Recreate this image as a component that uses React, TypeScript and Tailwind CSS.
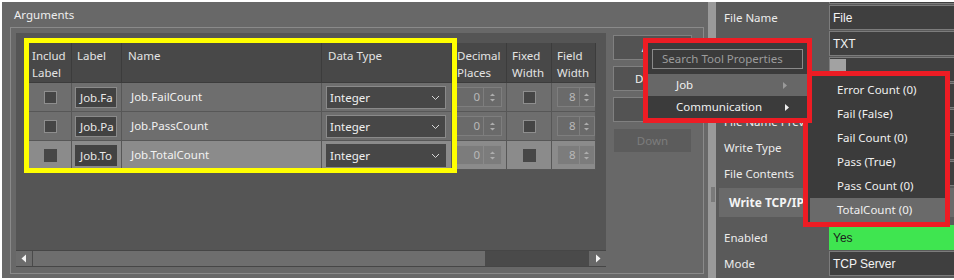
import React from "react";

const rows = [
  { label: "Job.Fa", name: "Job.FailCount", sel: false },
  { label: "Job.Pa", name: "Job.PassCount", sel: false },
  { label: "Job.To", name: "Job.TotalCount", sel: true },
];

const headers = ["Includ\nLabel", "Label", "Name", "Data Type", "Decimal\nPlaces", "Fixed\nWidth", "Field\nWidth"];

const cols = "grid grid-cols-[43px_50px_200px_130px_55px_45px_44px]";

function Check({ sel }: { sel: boolean }) {
  return (
    <div
      className={
        sel
          ? "w-[13px] h-[13px] bg-[#474747]"
          : "w-[13px] h-[13px] bg-[#454545] border border-[#8e8e8e]"
      }
    />
  );
}

function Arrows() {
  return (
    <svg width="7" height="11" viewBox="0 0 7 11">
      <polygon points="1,4 6,4 3.5,1.5" fill="#adadad" />
      <polygon points="1,7 6,7 3.5,9.5" fill="#adadad" />
    </svg>
  );
}

function Spin({ value, sel, w }: { value: string; sel: boolean; w: string }) {
  const bg = sel ? "bg-[#7c7c7c] border-[#8a8a8a]" : "bg-[#6a6a6a] border-[#7e7e7e]";
  return (
    <div className="flex h-[20px]">
      <div className={`${w} ${bg} border flex items-center justify-end pr-[3px] text-[#b8b8b8]`}>{value}</div>
      <div className={`w-[18px] ${bg} border border-l-0 flex items-center justify-center`}>
        <Arrows />
      </div>
    </div>
  );
}

function Chevron() {
  return (
    <svg width="9" height="6" viewBox="0 0 9 6">
      <polyline points="1,1 4.5,4.5 8,1" fill="none" stroke="#d8d8d8" strokeWidth="1" />
    </svg>
  );
}

function Table() {
  return (
    <div className="w-[567px]">
      <div className={`${cols} h-[40px] bg-[#484848]`}>
        {headers.map((h, i) => (
          <div
            key={h}
            className={`border-r border-b border-[#3c3c3c] pt-[4px] leading-[17px] whitespace-pre text-[#e4e4e4] ${
              i === 0 ? "pl-[3px]" : i === 2 || i === 3 ? "pl-[6px]" : "pl-[5px]"
            }`}
          >
            {h}
          </div>
        ))}
      </div>
      {rows.map((r) => {
        const bg = r.sel ? "bg-[#8b8b8b]" : "bg-[#6e6e6e]";
        const cell = `border-r border-b border-[#575757] h-[29px] ${bg}`;
        return (
          <div key={r.name} className={cols}>
            <div className={`${cell} flex items-center justify-center`}>
              <Check sel={r.sel} />
            </div>
            <div className={`${cell} pl-[3px] pt-[4px]`}>
              <div
                className={`w-[42px] h-[21px] bg-[#424242] border ${
                  r.sel ? "border-[#424242]" : "border-[#8a8a8a]"
                } pl-[4px] overflow-hidden whitespace-nowrap leading-[19px] text-[#e8e8e8]`}
              >
                {r.label}
              </div>
            </div>
            <div className={`${cell} pl-[9px] flex items-center text-[#f2f2f2]`}>{r.name}</div>
            <div className={`${cell} pl-[4px] pt-[3px]`}>
              <div
                className={`w-[120px] h-[23px] bg-[#474747] border ${
                  r.sel ? "border-[#474747]" : "border-[#8a8a8a]"
                } flex items-center justify-between pl-[3px] pr-[5px] text-[#f0f0f0]`}
              >
                <span>Integer</span>
                <Chevron />
              </div>
            </div>
            <div className={`${cell} pl-[2px] pt-[4px]`}>
              <Spin value="0" sel={r.sel} w="w-[30px]" />
            </div>
            <div className={`${cell} flex items-center justify-center`}>
              <Check sel={r.sel} />
            </div>
            <div className={`${cell} pl-[5px] pt-[4px] overflow-hidden`}>
              <Spin value="8" sel={r.sel} w="w-[26px]" />
            </div>
          </div>
        );
      })}
    </div>
  );
}

function Btn({ text, disabled }: { text: string; disabled?: boolean }) {
  return (
    <div
      className={
        disabled
          ? "h-[25px] border border-[#686868] bg-[#5c5c5c] flex items-center justify-center text-[#7c7c7c]"
          : "h-[25px] border border-[#808080] bg-[#535353] flex items-center justify-center text-[#f0f0f0]"
      }
    >
      {text}
    </div>
  );
}

// labels hidden under the popups are left empty
const props = [
  { label: "File Name", value: "File" },
  { label: "", value: "TXT" },
  { label: "", value: "", swatch: true },
  { label: "", value: "" },
  { label: "File Name Preview", value: "" },
  { label: "Write Type", value: "" },
  { label: "File Contents", value: "" },
];

function PropRow({ label, value, green, swatch }: { label: string; value: string; green?: boolean; swatch?: boolean }) {
  return (
    <div className="h-[26px] flex">
      <div className="w-[113px] pl-[8px] h-[25px] flex items-center whitespace-nowrap overflow-hidden text-[#ececec]">
        {label}
      </div>
      <div
        className={`flex-1 h-[25px] border-l border-t border-b pl-[3px] flex items-center font-['Liberation_Sans',sans-serif] text-[12px] ${
          green ? "bg-[#3fe550] border-[#3fe550] text-[#1c1c1c]" : "bg-[#3f3f3f] border-[#7c7c7c] text-[#f4f4f4]"
        }`}
      >
        {swatch ? <div className="w-[16px] h-[12px] -ml-[3px] mt-[-10px] bg-[#a2a2a2]" /> : value}
      </div>
    </div>
  );
}

export default function App() {
  return (
    <div className="relative w-[954px] h-[280px] overflow-hidden bg-white pt-[2px] pb-[2px] pl-[2px] flex text-[11.5px] font-['Noto_Sans',sans-serif]">
      {/* Arguments panel */}
      <section className="w-[706px] bg-[#686868] flex flex-col">
        <div className="h-[25px] pl-[12px] flex items-center text-[#eeeeee]">Arguments</div>
        <div className="ml-[8px] mb-[4px] w-[694px] flex-1 border border-[#8a8a8a] pt-[5px] pl-[5px] pb-[6px] flex gap-[7px]">
          <div className="w-[590px] bg-[#555555] flex flex-col">
            <div className="flex-1 pl-[13px] pt-[10px]">
              <Table />
            </div>
            <div className="h-[17px] flex border-t border-b border-[#464646]">
              <div className="w-[17px] bg-[#6c6c6c] border-r border-[#4a4a4a] flex items-center justify-center">
                <svg width="6" height="9" viewBox="0 0 6 9">
                  <polygon points="5,0.5 5,8.5 0.5,4.5" fill="#f4f4f4" />
                </svg>
              </div>
              <div className="w-[452px] bg-[#6e6e6e]" />
              <div className="flex-1 bg-[#4a4a4a]" />
              <div className="w-[17px] bg-[#686868] flex items-center justify-center">
                <svg width="6" height="9" viewBox="0 0 6 9">
                  <polygon points="1,0.5 1,8.5 5.5,4.5" fill="#f4f4f4" />
                </svg>
              </div>
            </div>
          </div>
          <div className="w-[79px] pt-[2px] flex flex-col gap-[6px]">
            <Btn text="Add" />
            <Btn text="Delete" />
            <Btn text="Up" />
            <Btn text="Down" disabled />
          </div>
        </div>
      </section>

      {/* Splitter */}
      <div className="w-[8px] bg-[#9a9a9a] flex flex-col">
        <div className="h-[185px]" />
        <div className="ml-[3px] w-[4px] h-[15px] bg-[#7a7a7a]" />
      </div>

      {/* Properties panel */}
      <section className="flex-1 bg-[#5a5a5a] flex flex-col">
        <div className="h-[3px] flex">
          <div className="w-[113px]" />
          <div className="flex-1 h-[2px] bg-[#3f3f3f] border-l border-b border-[#7c7c7c]" />
        </div>
        {props.map((p, i) => (
          <PropRow key={i} {...p} />
        ))}
        <div className="ml-[3px] mt-[1px] h-[29px] bg-[#6a6a6a] pl-[10px] flex items-center font-bold text-[12px] text-[#f4f4f4]">
          Write TCP/IP
        </div>
        <div className="h-[8px]" />
        <PropRow label="Enabled" value="Yes" green />
        <PropRow label="Mode" value="TCP Server" />
      </section>

      {/* Submenu popup */}
      <div className="absolute left-[803px] top-[71px] w-[147px] h-[156px] border-[5px] border-[#ed1c24] bg-[#3b3b3b] pt-[2px] text-[#f0f0f0]">
        {["Error Count (0)", "Fail (False)", "Fail Count (0)", "Pass (True)", "Pass Count (0)", "TotalCount (0)"].map(
          (t, i) => (
            <div
              key={t}
              className={`h-[24px] ml-[2px] pl-[27px] flex items-center ${i === 5 ? "bg-[#6a6a6a]" : ""}`}
            >
              {t}
            </div>
          )
        )}
      </div>

      {/* Tool properties popup */}
      <div className="absolute left-[643px] top-[38px] w-[169px] h-[85px] border-[5px] border-[#ed1c24] bg-[#3b3b3b] text-[#f0f0f0]">
        <div className="px-[4px] pt-[6px] pb-[5px]">
          <div className="h-[20px] border border-[#8a8a8a] pl-[9px] flex items-center text-[#9c9c9c] whitespace-nowrap">
            Search Tool Properties
          </div>
        </div>
        <div className="h-[22px] bg-[#676767] pl-[28px] pr-[20px] flex items-center justify-between">
          <span>Job</span>
          <svg width="4" height="7" viewBox="0 0 4 7">
            <polygon points="0,0 4,3.5 0,7" fill="#9a9a9a" />
          </svg>
        </div>
        <div className="h-[22px] pl-[28px] pr-[18px] flex items-center justify-between">
          <span>Communication</span>
          <svg width="4" height="7" viewBox="0 0 4 7">
            <polygon points="0,0 4,3.5 0,7" fill="#f0f0f0" />
          </svg>
        </div>
      </div>

      {/* Highlight around the arguments grid */}
      <div className="absolute left-[24px] top-[38px] w-[433px] h-[135px] border-[5px] border-[#ffff00]" />
    </div>
  );
}
